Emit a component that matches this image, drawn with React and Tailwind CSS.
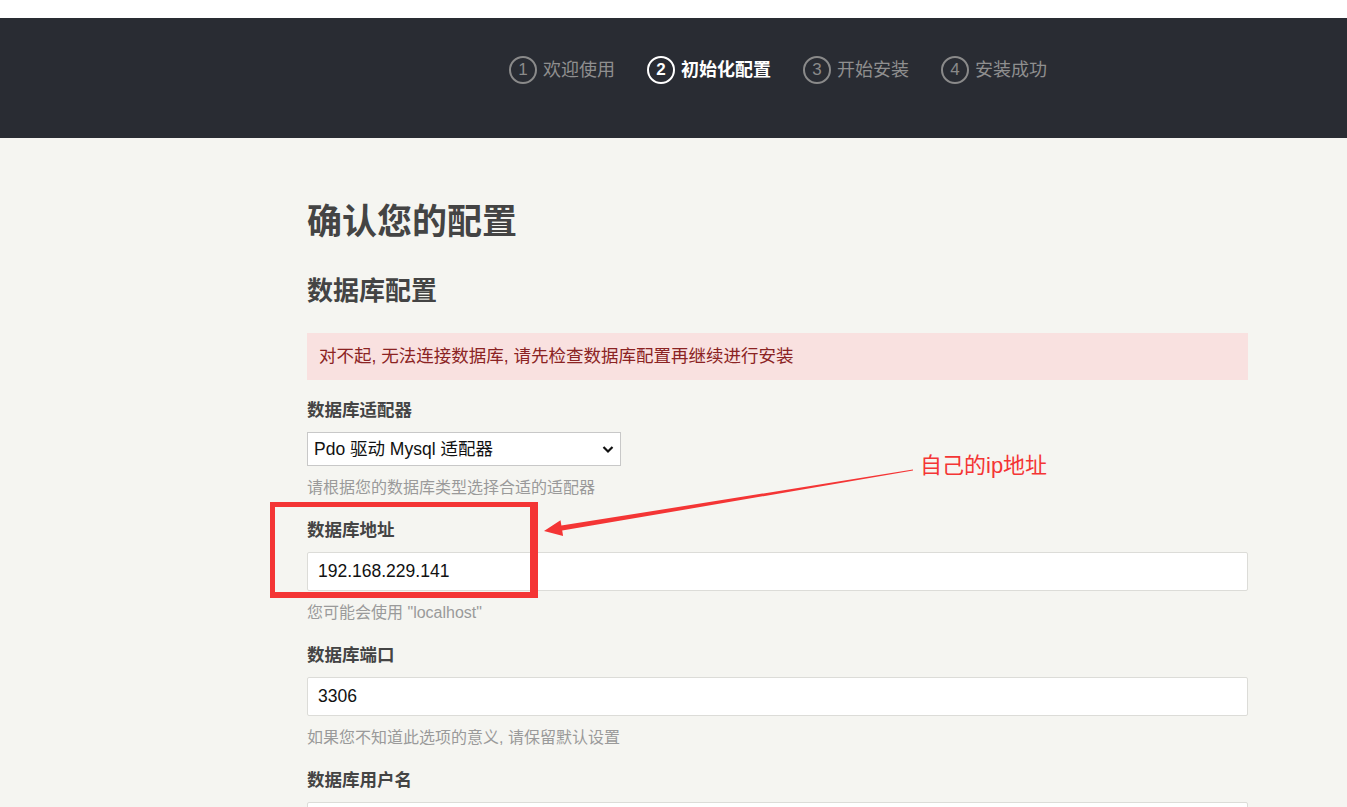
const font = "font-['Liberation_Sans','Noto_Sans_CJK_SC',sans-serif]"

const steps = [
  { n: 1, label: '欢迎使用' },
  { n: 2, label: '初始化配置', active: true },
  { n: 3, label: '开始安装' },
  { n: 4, label: '安装成功' },
]

function Field({ label, value, help }) {
  return (
    <div className="mt-[18px]">
      <div className="text-[17.5px] leading-[24px] font-bold text-[#444]">{label}</div>
      <div className="mt-[10px] h-[39px] bg-white border border-[#dcdcd8] rounded-[2px] flex items-center pl-[10px] text-[17.5px] text-[#111]">
        {value}
      </div>
      {help && <div className="mt-[10px] text-[16px] leading-[24px] text-[#9a9a9a]">{help}</div>}
    </div>
  )
}

export default function App() {
  return (
    <div className={`${font} min-h-[807px] bg-[#f5f5f1] relative overflow-hidden`}>
      <div className="h-[18px] bg-white" />
      <div className="h-[120px] bg-[#292c33] pt-[38px]">
        <div className="flex ml-[509px] gap-[32px]">
          {steps.map(s => (
            <div key={s.n} className="flex items-center gap-[6px]">
              <div
                className={
                  s.active
                    ? 'w-[28px] h-[28px] rounded-full border-2 border-white text-white font-bold flex items-center justify-center text-[17px]'
                    : 'w-[28px] h-[28px] rounded-full border-2 border-[#8a8a8a] text-[#8a8a8a] flex items-center justify-center text-[17px]'
                }
              >
                {s.n}
              </div>
              <div className={s.active ? 'text-[18px] text-white font-bold' : 'text-[18px] text-[#8f8f8f]'}>
                {s.label}
              </div>
            </div>
          ))}
        </div>
      </div>

      <div className="ml-[307px] w-[941px] pt-[62px]">
        <h1 className="text-[35px] leading-[44px] font-bold text-[#444]">确认您的配置</h1>
        <h2 className="mt-[29px] text-[26px] leading-[36px] font-bold text-[#444]">数据库配置</h2>

        <div className="mt-[24px] h-[47px] bg-[#f9e1e0] flex items-center pl-[12px] text-[17.5px] text-[#8b2323]">
          对不起, 无法连接数据库, 请先检查数据库配置再继续进行安装
        </div>

        <div className="mt-[18px]">
          <div className="text-[17.5px] leading-[24px] font-bold text-[#444]">数据库适配器</div>
          <div className="relative mt-[10px] w-[314px] h-[34px] bg-white border border-[#c8c8c8] flex items-center pl-[6px] text-[17.5px] text-[#111]">
            Pdo 驱动 Mysql 适配器
            <svg className="absolute right-[6px] top-[12px]" width="12" height="9" viewBox="0 0 12 9">
              <path d="M1.5 2 L6 6.5 L10.5 2" fill="none" stroke="#111" strokeWidth="2.2" />
            </svg>
          </div>
          <div className="mt-[10px] text-[16px] leading-[24px] text-[#9a9a9a]">请根据您的数据库类型选择合适的适配器</div>
        </div>

        <Field label="数据库地址" value="192.168.229.141" help={'您可能会使用 "localhost"'} />
        <Field label="数据库端口" value="3306" help="如果您不知道此选项的意义, 请保留默认设置" />
        <Field label="数据库用户名" value="" />
      </div>

      <div className="absolute left-[270px] top-[502px] w-[268px] h-[96px] border-[5px] border-r-[8px] border-b-[6px] border-[#f43535]" />
      <svg className="absolute left-0 top-0 pointer-events-none" width="1347" height="807">
        <polygon
          points="544,531 560.5,520.2 561.4,525.6 913,469.6 913,470.6 562.2,530.6 563.1,536"
          fill="#f43535"
        />
      </svg>
      <div className="absolute left-[920px] top-[452px] text-[22px] leading-[28px] text-[#f43535]">自己的ip地址</div>
    </div>
  )
}
